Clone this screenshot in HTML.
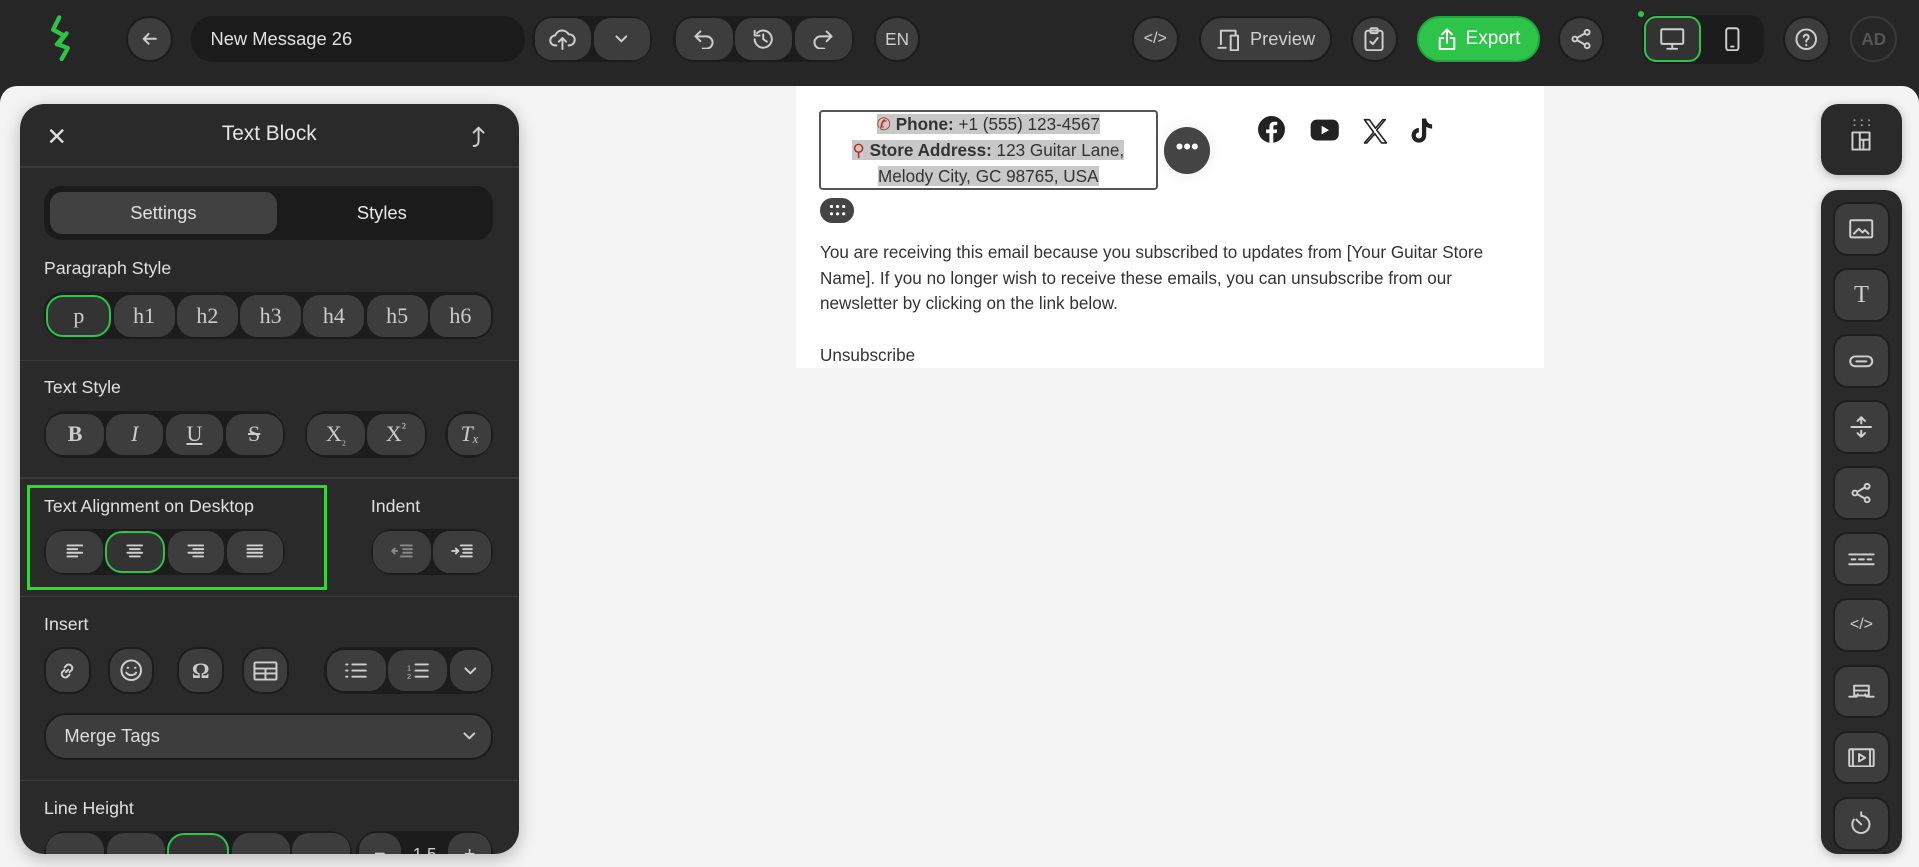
<!DOCTYPE html>
<html><head><meta charset="utf-8"><style>
*{box-sizing:border-box;margin:0;padding:0}
html,body{width:1919px;height:867px;overflow:hidden;background:#262626;font-family:"Liberation Sans",sans-serif}
#w{zoom:1.22385;width:1568px;height:710px;position:relative}
.a{position:absolute}
.btn{position:absolute;background:#3d3d3d;border:2px solid #1c1c1c;display:flex;align-items:center;justify-content:center;color:#cfcfcf}
.grp{position:absolute;background:#1c1c1c;border-radius:18px;display:flex;gap:2px;padding:2px}
.grp div{flex:1;background:#3d3d3d;border-radius:14px;display:flex;align-items:center;justify-content:center;color:#ccc}
svg{stroke:#cfcfcf;fill:none;stroke-width:1.6;stroke-linecap:round;stroke-linejoin:round}
.lbl{position:absolute;color:#e0e0e0;font-size:14.5px}
.hr{position:absolute;left:0;right:0;height:1px;background:#3a3a3a}
.ser{font-family:"Liberation Serif",serif;font-size:18px;color:#ccc}
.sb{position:absolute;left:10px;width:46px;height:44px;background:#3d3d3d;border:2px solid #1e1e1e;border-radius:12px;display:flex;align-items:center;justify-content:center}
</style></head><body><div id="w">
<!-- top bar -->
<svg class="a" style="left:38px;top:12px;stroke:#2ec44a;stroke-width:3.5" width="22" height="38" viewBox="0 0 22 38"><path d="M10 2 L5 12 L14 17 L8 24"/><path d="M16 15 L9 24 L17 27 L12 36"/></svg>
<div class="btn" style="left:103px;top:13px;width:38px;height:38px;border-radius:19px"><svg width="16" height="16" viewBox="0 0 16 16"><path d="M13 8H3M7 4L3 8l4 4"/></svg></div>
<div class="a" style="left:156px;top:13px;width:273px;height:38px;border-radius:18px;background:#1b1b1b;color:#e2e2e2;font-size:15px;line-height:38px;padding-left:16px">New Message 26</div>
<div class="grp" style="left:435px;top:13px;width:98px;height:38px"><div><svg width="22" height="20" viewBox="0 0 22 20"><path d="M6 15H5a4 4 0 0 1 0-8 6 6 0 0 1 11-1 4.5 4.5 0 0 1 1 9h-1M11 18V9M8 12l3-3 3 3"/></svg></div><div><svg width="12" height="8" viewBox="0 0 12 8"><path d="M2 2l4 4 4-4"/></svg></div></div>
<div class="grp" style="left:550px;top:13px;width:148px;height:38px"><div><svg width="18" height="16" viewBox="0 0 18 16"><path d="M6 2L2 6l4 4M2 6h9a5 5 0 0 1 0 10H8"/></svg></div><div><svg width="20" height="20" viewBox="0 0 20 20"><path d="M3 10a7 7 0 1 0 2-5M3 3v4h4M10 6v4l3 2"/></svg></div><div><svg width="18" height="16" viewBox="0 0 18 16"><path d="M12 2l4 4-4 4M16 6H7a5 5 0 0 0 0 10h3"/></svg></div></div>
<div class="btn" style="left:714px;top:13px;width:38px;height:38px;border-radius:19px;font-size:14px">EN</div>
<div class="btn" style="left:925px;top:13px;width:38px;height:38px;border-radius:19px;font-size:13px">&lt;/&gt;</div>
<div class="btn" style="left:980px;top:13px;width:108px;height:38px;border-radius:19px;font-size:15px;gap:6px"><svg width="22" height="20" viewBox="0 0 22 20"><path d="M4 14V3h12v3M2 17h6M12 7h6v12h-6z"/></svg>Preview</div>
<div class="btn" style="left:1104px;top:13px;width:38px;height:38px;border-radius:19px"><svg width="18" height="20" viewBox="0 0 18 20"><rect x="2" y="3" width="14" height="16" rx="2"/><rect x="6" y="1" width="6" height="4" rx="1"/><path d="M6 12l2 2 4-5"/></svg></div>
<div class="a" style="left:1158px;top:13px;width:100px;height:38px;border-radius:19px;background:#2ec44a;border:2px solid #1fa83a;color:#fff;font-size:15.5px;display:flex;align-items:center;justify-content:center;gap:6px"><svg width="18" height="20" viewBox="0 0 18 20" style="stroke:#fff"><path d="M9 13V2M5 6l4-4 4 4M6 9H3v9h12V9h-3"/></svg>Export</div>
<div class="btn" style="left:1273px;top:13px;width:38px;height:38px;border-radius:19px"><svg width="18" height="18" viewBox="0 0 18 18"><circle cx="4" cy="9" r="2"/><circle cx="14" cy="3.5" r="2"/><circle cx="14" cy="14.5" r="2"/><path d="M6 8l6-3.5M6 10l6 3.5"/></svg></div>
<div class="a" style="left:1338px;top:9px;width:5px;height:5px;border-radius:3px;background:#2ec44a"></div>
<div class="a" style="left:1342px;top:12px;width:99px;height:40px;border-radius:12px;background:#1c1c1c"></div>
<div class="a" style="left:1343px;top:13px;width:47px;height:38px;border-radius:10px;background:#333;border:2px solid #2ec44a;display:flex;align-items:center;justify-content:center"><svg width="20" height="18" viewBox="0 0 20 18"><rect x="1" y="1" width="18" height="12" rx="1"/><path d="M10 13v4M6 17h8"/></svg></div>
<div class="a" style="left:1392px;top:13px;width:47px;height:38px;display:flex;align-items:center;justify-content:center"><svg width="12" height="20" viewBox="0 0 12 20"><rect x="1" y="1" width="10" height="18" rx="2"/><path d="M5 16h2"/></svg></div>
<div class="btn" style="left:1457px;top:13px;width:38px;height:38px;border-radius:19px"><svg width="20" height="20" viewBox="0 0 20 20"><circle cx="10" cy="10" r="8"/><path d="M8 8a2 2 0 1 1 3 2c-1 .5-1 1-1 2M10 14.5v.5"/></svg></div>
<div class="a" style="left:1512px;top:13px;width:38px;height:38px;border-radius:19px;border:2px solid #3a3a3a;color:#555;font-weight:bold;font-size:14px;display:flex;align-items:center;justify-content:center">AD</div>
<!-- canvas -->
<div class="a" style="left:0;top:70px;width:1568px;height:650px;background:#f4f4f4;border-radius:14px 14px 0 0"></div>
<div class="a" style="left:650px;top:70px;width:612px;height:231px;background:#fff"></div>
<div class="a" style="left:669px;top:90px;width:277px;height:65px;border:2px solid #555;border-radius:3px;text-align:center;font-size:14px;line-height:21px;color:#333;padding-top:0">
<span style="background:#c8c8c8"><span style="color:#c0281b">✆</span> <b>Phone:</b> +1 (555) 123-4567</span><br><span style="background:#c8c8c8"><span style="color:#c0281b">⚲</span> <b>Store Address:</b> 123 Guitar Lane,</span><br><span style="background:#c8c8c8">Melody City, GC 98765, USA</span></div>
<div class="a" style="left:951px;top:104px;width:38px;height:38px;border-radius:19px;background:#444;color:#fff;font-size:18px;text-align:center;line-height:32px;box-shadow:0 0 12px rgba(0,0,0,.08)">•••</div>
<div class="a" style="left:670px;top:162px;width:28px;height:20px;border-radius:10px;background:#444"><svg class="a" style="left:7px;top:5px;stroke:none" width="14" height="10" viewBox="0 0 14 10"><g fill="#fff"><circle cx="2" cy="2" r="1.3"/><circle cx="7" cy="2" r="1.3"/><circle cx="12" cy="2" r="1.3"/><circle cx="2" cy="8" r="1.3"/><circle cx="7" cy="8" r="1.3"/><circle cx="12" cy="8" r="1.3"/></g></svg></div>
<svg class="a" style="left:1028px;top:95px;stroke:none" width="150" height="24" viewBox="0 0 150 24">
<circle cx="11" cy="11" r="11" fill="#222"/><path d="M12.5 22v-8h2.7l.4-3h-3.1V9c0-.9.3-1.5 1.6-1.5h1.6V4.8c-.3 0-1.3-.1-2.4-.1-2.4 0-4 1.4-4 4.1V11H6.6v3h2.7v8z" fill="#fff"/>
<rect x="43" y="3" width="23" height="17" rx="5" fill="#222"/><path d="M52 8v7l6-3.5z" fill="#fff"/>
<path d="M87 3h4l5 7 6-7h2l-7 8.5 8 10.5h-4l-5.5-7.5-6.5 7.5h-2l7.5-8.7z" fill="none" stroke="#222" stroke-width="1.3"/>
<path d="M134 2h3.5c.3 3 2 4.6 4.8 4.8v3.5c-1.8 0-3.4-.6-4.8-1.5v7a6 6 0 1 1-6-6v3.6a2.5 2.5 0 1 0 2.5 2.5z" fill="#222"/></svg>
<div class="a" style="left:670px;top:196px;width:570px;font-size:14px;line-height:21px;color:#333">You are receiving this email because you subscribed to updates from [Your Guitar Store Name]. If you no longer wish to receive these emails, you can unsubscribe from our newsletter by clicking on the link below.<br><br>Unsubscribe</div>
<!-- right sidebar -->
<div class="a" style="left:1488px;top:85px;width:66px;height:58px;border-radius:14px;background:#2a2a2a;box-shadow:0 2px 8px rgba(0,0,0,.25)">
<svg class="a" style="left:25px;top:12px;stroke:none" width="16" height="6" viewBox="0 0 16 6"><g fill="#999"><circle cx="2" cy="1" r=".8"/><circle cx="8" cy="1" r=".8"/><circle cx="14" cy="1" r=".8"/><circle cx="2" cy="5" r=".8"/><circle cx="8" cy="5" r=".8"/><circle cx="14" cy="5" r=".8"/></g></svg>
<svg class="a" style="left:24px;top:21px" width="18" height="18" viewBox="0 0 18 18"><rect x="2" y="2" width="14" height="14"/><path d="M8 2v14M8 8h8M11 8v8"/></svg></div>
<div class="a" style="left:1488px;top:155px;width:66px;height:543px;border-radius:14px;background:#2a2a2a;box-shadow:0 2px 8px rgba(0,0,0,.25)">
<div class="sb" style="top:10px"><svg width="20" height="16" viewBox="0 0 20 16"><rect x="1" y="1" width="18" height="14" rx="1"/><path d="M4 12l4-4 3 3 2-2 3 3"/></svg></div>
<div class="sb" style="top:64px"><span class="ser" style="font-size:20px">T</span></div>
<div class="sb" style="top:118px"><svg width="20" height="12" viewBox="0 0 20 12"><rect x="1" y="2" width="18" height="8" rx="4"/><path d="M6 6h8"/></svg></div>
<div class="sb" style="top:172px"><svg width="20" height="18" viewBox="0 0 20 18"><path d="M2 9h16M10 1v5M7 4l3-3 3 3M10 17v-5M7 14l3 3 3-3"/></svg></div>
<div class="sb" style="top:226px"><svg width="18" height="18" viewBox="0 0 18 18"><circle cx="4" cy="9" r="2"/><circle cx="14" cy="3.5" r="2"/><circle cx="14" cy="14.5" r="2"/><path d="M6 8l6-3.5M6 10l6 3.5"/></svg></div>
<div class="sb" style="top:280px"><svg width="22" height="12" viewBox="0 0 22 12"><path d="M1 2h20M1 10h20M3 6h3M9 6h4M16 6h3"/></svg></div>
<div class="sb" style="top:334px;color:#ccc;font-size:13px">&lt;/&gt;</div>
<div class="sb" style="top:388px"><svg width="22" height="16" viewBox="0 0 22 16"><path d="M5 3h12v8H5zM1 12h6l1-2M21 12h-6l-1-2M5 7h12"/></svg></div>
<div class="sb" style="top:442px"><svg width="22" height="16" viewBox="0 0 22 16"><rect x="1" y="1" width="20" height="14" rx="1"/><path d="M9 5v6l5-3zM4 1v14M18 1v14"/></svg></div>
<div class="sb" style="top:496px"><svg width="20" height="20" viewBox="0 0 20 20"><path d="M4 7a7 7 0 1 0 6-3M10 11l-4-4M10 1v2"/></svg></div>
</div>
<!-- left panel -->
<div class="a" style="left:16px;top:85px;width:408px;height:613px;border-radius:20px;background:#2a2a2a;box-shadow:0 4px 14px rgba(0,0,0,.25);overflow:hidden">
<div class="a" style="left:22px;top:15px;color:#ddd;font-size:20px">✕</div>
<div class="a" style="left:0;right:0;top:15px;text-align:center;color:#e5e5e5;font-size:17px">Text Block</div>
<svg class="a" style="left:368px;top:16px" width="14" height="20" viewBox="0 0 14 20"><path d="M3 18c2 0 4-1 4-4V3M3 7l4-4 4 4"/></svg>
<div class="hr" style="top:51px"></div>
<div class="a" style="left:20px;top:67px;width:367px;height:44px;border-radius:14px;background:#1b1b1b"></div>
<div class="a" style="left:25px;top:72px;width:185px;height:34px;border-radius:10px;background:#414141;color:#e0e0e0;font-size:15px;text-align:center;line-height:34px">Settings</div>
<div class="a" style="left:210px;top:72px;width:172px;height:34px;color:#e8e8e8;font-size:15px;text-align:center;line-height:34px">Styles</div>
<div class="lbl" style="left:20px;top:126px">Paragraph Style</div>
<div class="grp ser" style="left:20px;top:154px;width:367px;height:38px;border-radius:16px"><div style="background:#333;border:2px solid #2ec44a">p</div><div>h1</div><div>h2</div><div>h3</div><div>h4</div><div>h5</div><div>h6</div></div>
<div class="hr" style="top:209px"></div>
<div class="lbl" style="left:20px;top:223px">Text Style</div>
<div class="grp ser" style="left:20px;top:251px;width:197px;height:38px"><div style="font-weight:bold">B</div><div style="font-style:italic">I</div><div style="text-decoration:underline">U</div><div style="text-decoration:line-through">S</div></div>
<div class="grp ser" style="left:233px;top:251px;width:100px;height:38px"><div>X<span style="font-size:10px;position:relative;top:4px">₂</span></div><div>X<span style="font-size:11px;position:relative;top:-5px">²</span></div></div>
<div class="grp ser" style="left:348px;top:251px;width:39px;height:38px;border-radius:19px"><div style="font-style:italic">T<span style="font-size:10px;position:relative;top:4px">x</span></div></div>
<div class="hr" style="top:305px"></div>
<div class="a" style="left:6px;top:311px;width:245px;height:86px;border:3px solid #1ee61e"></div>
<div class="lbl" style="left:20px;top:320px">Text Alignment on Desktop</div>
<div class="lbl" style="left:287px;top:320px">Indent</div>
<div class="grp" style="left:20px;top:347px;width:197px;height:38px">
<div><svg width="16" height="14" viewBox="0 0 16 14"><path d="M2 2h12M2 5h8M2 8h12M2 11h8"/></svg></div>
<div style="background:#333;border:2px solid #2ec44a"><svg width="16" height="14" viewBox="0 0 16 14"><path d="M2 2h12M4 5h8M2 8h12M4 11h8"/></svg></div>
<div><svg width="16" height="14" viewBox="0 0 16 14"><path d="M2 2h12M6 5h8M2 8h12M6 11h8"/></svg></div>
<div><svg width="16" height="14" viewBox="0 0 16 14"><path d="M2 2h12M2 5h12M2 8h12M2 11h12"/></svg></div></div>
<div class="grp" style="left:287px;top:347px;width:100px;height:38px">
<div><svg width="18" height="14" viewBox="0 0 18 14" style="stroke:#888"><path d="M8 2h9M10 5h7M10 8h7M8 11h9M5 6.5H1M3 4.5l-2 2 2 2"/></svg></div>
<div><svg width="18" height="14" viewBox="0 0 18 14"><path d="M8 2h9M10 5h7M10 8h7M8 11h9M1 6.5h5M4 4.5l2 2-2 2"/></svg></div></div>
<div class="hr" style="top:402px"></div>
<div class="lbl" style="left:20px;top:417px">Insert</div>
<div class="btn" style="left:20px;top:444px;width:38px;height:38px;border-radius:16px"><svg width="18" height="18" viewBox="0 0 18 18"><path d="M8 10l2-2M7 6l2-2a3 3 0 0 1 4 4l-2 2M11 12l-2 2a3 3 0 0 1-4-4l2-2"/></svg></div>
<div class="btn" style="left:72px;top:444px;width:38px;height:38px;border-radius:16px"><svg width="20" height="20" viewBox="0 0 20 20"><circle cx="10" cy="10" r="8"/><path d="M6 12a5 5 0 0 0 8 0M7 8h.5M13 8h.5"/></svg></div>
<div class="btn ser" style="left:129px;top:444px;width:38px;height:38px;border-radius:16px;font-weight:bold">Ω</div>
<div class="btn" style="left:182px;top:444px;width:38px;height:38px;border-radius:16px"><svg width="22" height="18" viewBox="0 0 22 18"><rect x="2" y="2" width="18" height="14" rx="1"/><path d="M2 7h18M11 7v9M2 11h18"/></svg></div>
<div class="grp" style="left:249px;top:444px;width:138px;height:38px"><div><svg width="18" height="14" viewBox="0 0 18 14"><path d="M6 2h11M6 7h11M6 12h11M1 2h1M1 7h1M1 12h1"/></svg></div><div><svg width="18" height="14" viewBox="0 0 18 14"><path d="M7 2h10M7 7h10M7 12h10"/><text x="0" y="7" font-size="6" fill="#ccc" stroke="none">1</text><text x="0" y="14" font-size="6" fill="#ccc" stroke="none">2</text></svg></div><div style="flex:.7"><svg width="12" height="8" viewBox="0 0 12 8"><path d="M2 2l4 4 4-4"/></svg></div></div>
<div class="a" style="left:20px;top:498px;width:367px;height:38px;border-radius:18px;background:#3d3d3d;border:2px solid #1c1c1c;color:#ddd;font-size:15px;line-height:34px;padding-left:15px">Merge Tags<svg style="position:absolute;right:12px;top:13px" width="12" height="8" viewBox="0 0 12 8"><path d="M2 2l4 4 4-4"/></svg></div>
<div class="hr" style="top:552px"></div>
<div class="lbl" style="left:20px;top:567px">Line Height</div>
<div class="grp" style="left:20px;top:594px;width:252px;height:38px"><div></div><div></div><div style="background:#333;border:2px solid #2ec44a"></div><div></div><div></div></div>
<div class="grp" style="left:275px;top:594px;width:112px;height:38px;color:#ccc"><div>−</div><div style="background:#1c1c1c;color:#ccc;font-size:14px">1.5</div><div>+</div></div>
</div>
</div></body></html>
